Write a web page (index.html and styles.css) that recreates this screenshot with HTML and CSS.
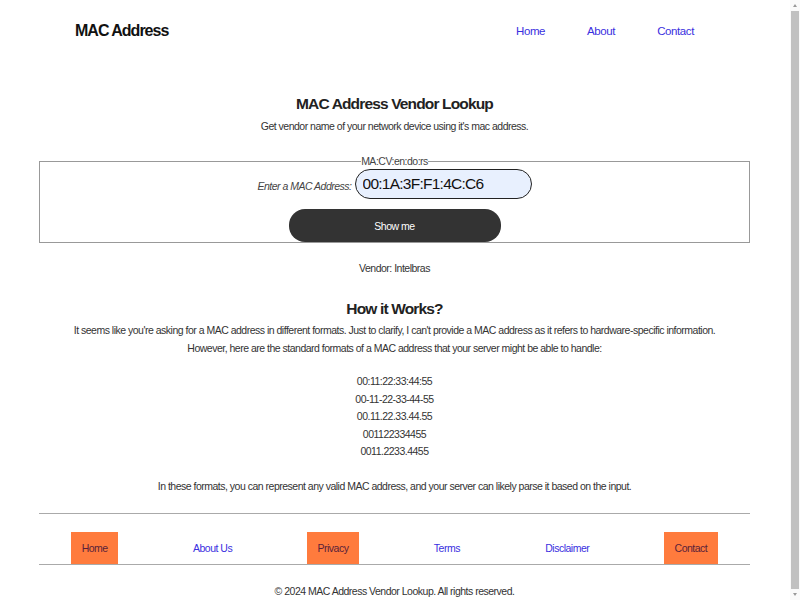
FILE: index.html
```html
<!DOCTYPE html>
<html lang="en">
<head>
<meta charset="utf-8">
<title>MAC Address Vendor Lookup</title>
<link rel="stylesheet" href="styles.css">
</head>
<body>
<div class="page">
  <header class="site-header">
    <div class="brand">MAC Address</div>
    <nav class="top-nav">
      <a href="#">Home</a>
      <a href="#">About</a>
      <a href="#">Contact</a>
    </nav>
  </header>

  <main class="content">
    <h1 class="title">MAC Address Vendor Lookup</h1>
    <p class="subtitle">Get vendor name of your network device using it's mac address.</p>

    <fieldset class="lookup">
      <legend>MA:CV:en:do:rs</legend>
      <div class="input-row">
        <label class="mac-label" for="mac">Enter a MAC Address:</label>
        <input class="mac-input" id="mac" type="text" value="00:1A:3F:F1:4C:C6">
      </div>
      <button class="show-btn" type="button">Show me</button>
    </fieldset>

    <p class="vendor">Vendor: Intelbras</p>

    <h2 class="how">How it Works?</h2>
    <p class="explain">It seems like you're asking for a MAC address in different formats. Just to clarify, I can't provide a MAC address as it refers to hardware-specific information.<br>However, here are the standard formats of a MAC address that your server might be able to handle:</p>
    <ul class="formats">
      <li>00:11:22:33:44:55</li>
      <li>00-11-22-33-44-55</li>
      <li>00.11.22.33.44.55</li>
      <li>001122334455</li>
      <li>0011.2233.4455</li>
    </ul>
    <p class="explain last">In these formats, you can represent any valid MAC address, and your server can likely parse it based on the input.</p>
  </main>

  <footer class="site-footer">
    <nav class="foot-nav">
      <a class="boxed" href="#">Home</a>
      <a href="#">About Us</a>
      <a class="boxed" href="#">Privacy</a>
      <a href="#">Terms</a>
      <a href="#">Disclaimer</a>
      <a class="boxed" href="#">Contact</a>
    </nav>
    <p class="copy">&copy; 2024 MAC Address Vendor Lookup. All rights reserved.</p>
  </footer>
</div>
<div class="fake-scrollbar"><div class="arrow up"></div><div class="thumb"></div><div class="arrow down"></div></div>
</body>
</html>
```

FILE: styles.css
```css
html, body {
  margin: 0;
  padding: 0;
  overflow: hidden;
  background: #fff;
}
body {
  font-family: "Liberation Sans", Arial, sans-serif;
  color: #333;
  font-size: 10.5px;
  letter-spacing: -0.5px;
}
.page {
  width: 790px;
}
.site-header {
  display: flex;
  align-items: center;
  height: 62px;
  padding: 0 75px;
}
.brand {
  font-weight: bold;
  font-size: 16px;
  letter-spacing: -1px;
  color: #111;
  flex: 1;
}
.top-nav {
  display: flex;
  gap: 42px;
  margin-right: 21px;
}
.top-nav a {
  color: #3a2fe0;
  text-decoration: none;
  font-size: 11.5px;
  letter-spacing: -0.4px;
}
.content {
  padding: 0 40px 0 39px;
  text-align: center;
}
.title {
  font-size: 15.5px;
  letter-spacing: -0.85px;
  font-weight: bold;
  color: #222;
  margin: 31px 0 0;
  line-height: 22px;
}
.subtitle {
  margin: 2px 0 0;
  line-height: 18px;
}
.lookup {
  margin: 20px 0 0;
  border: 1px solid #999;
  padding: 0;
}
.lookup legend {
  color: #444;
  padding: 0;
  margin: 0 auto;
  line-height: 12px;
}
.input-row {
  display: flex;
  justify-content: center;
  align-items: center;
  margin-top: 2px;
}
.mac-label {
  font-style: italic;
  color: #444;
  margin-right: 3px;
  margin-top: 3px;
}
.mac-input {
  width: 177px;
  height: 30px;
  box-sizing: border-box;
  border: 1.5px solid #222;
  border-radius: 15px;
  background: #e8f0fe;
  font-family: inherit;
  font-size: 15.5px;
  letter-spacing: -0.75px;
  color: #111;
  padding: 0 7px;
  outline: none;
}
.show-btn {
  display: block;
  margin: 10px auto 0;
  width: 212px;
  height: 33px;
  background: #333;
  color: #fff;
  border: none;
  border-radius: 16px;
  font-family: inherit;
  font-size: 10.5px;
  letter-spacing: -0.5px;
}
.vendor {
  margin: 16px 0 0;
  line-height: 18px;
}
.how {
  font-size: 15.5px;
  letter-spacing: -0.85px;
  font-weight: bold;
  color: #222;
  margin: 21px 0 0;
  line-height: 22px;
}
.explain {
  margin: 1px 0 0;
  line-height: 18px;
}
.formats {
  list-style: none;
  margin: 16px 0 0;
  padding: 0;
  line-height: 17.5px;
}
.explain.last {
  margin-top: 16px;
}
.site-footer {
  padding: 0 40px 0 39px;
}
.foot-nav {
  display: flex;
  justify-content: space-around;
  margin-top: 18px;
  border-top: 1px solid #aaa;
  border-bottom: 1px solid #aaa;
  padding-top: 18px;
}
.foot-nav a {
  display: block;
  height: 32px;
  line-height: 32px;
  padding: 0 10.5px;
  color: #3a2fe0;
  text-decoration: none;
}
.foot-nav a.boxed {
  background: #ff7b3d;
  color: #5a1f3a;
}
.copy {
  text-align: center;
  margin: 17px 0 0;
  line-height: 18px;
}
.fake-scrollbar {
  position: fixed;
  top: 0;
  right: 0;
  width: 10px;
  height: 600px;
  background: #fafafa;
}
.fake-scrollbar .thumb {
  position: absolute;
  left: 1px;
  right: 1px;
  top: 11px;
  bottom: 11px;
  background: #c1c1c1;
}
.fake-scrollbar .arrow {
  position: absolute;
  left: 3px;
  width: 0;
  height: 0;
  border-left: 2px solid transparent;
  border-right: 2px solid transparent;
}
.fake-scrollbar .arrow.up {
  top: 4px;
  border-bottom: 3px solid #999;
}
.fake-scrollbar .arrow.down {
  bottom: 4px;
  border-top: 3px solid #999;
}
```
